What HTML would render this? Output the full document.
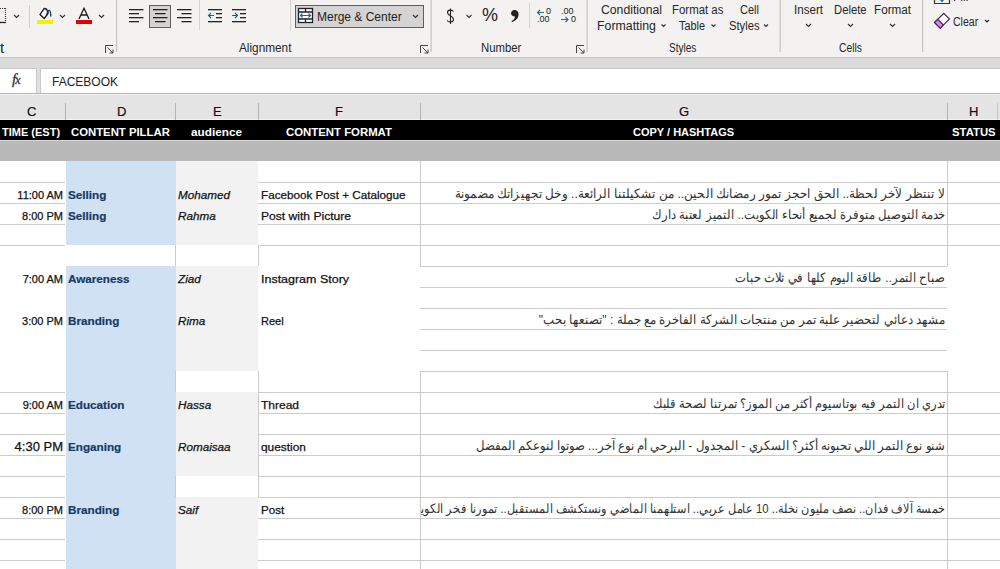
<!DOCTYPE html>
<html><head><meta charset="utf-8">
<style>
*{margin:0;padding:0;box-sizing:border-box}
html,body{width:1000px;height:569px;overflow:hidden;background:#fff;font-family:"Liberation Sans",sans-serif}
.a{position:absolute}
#ribbon{position:absolute;left:0;top:0;width:1000px;height:57px;background:#f3f2f1}
.lbl{position:absolute;font-size:12px;color:#262626;line-height:14px;white-space:nowrap}
.sep{position:absolute;width:1px;background:#c8c8c8}
.gsep{position:absolute;width:1px;background:#c6c6c6;top:0;height:52px}
.chev{position:absolute;width:5px;height:5px;border-right:1.3px solid #333;border-bottom:1.3px solid #333;transform:rotate(45deg)}
.dl{position:absolute;width:8px;height:8px}
.rt{position:absolute;font-size:12px;color:#262626;line-height:14px;white-space:nowrap}
#fbar{position:absolute;left:0;top:57px;width:1000px;height:36px;background:linear-gradient(#dadada,#dcdcdc 30%,#e3e3e3);border-top:1px solid #c6c5c4}
#colh{position:absolute;left:0;top:93px;width:1000px;height:27px;background:#e4e4e4;border-top:1px solid #b8b8b8;box-shadow:inset 0 1px 0 #f2f2f2,inset 0 -1px 0 #f4f4f4}
.ch{position:absolute;top:105px;font-size:13px;color:#111;line-height:13px;-webkit-text-stroke:0.2px #111}
.cdiv{position:absolute;top:103px;height:17px;width:1px;background:#b4b4b4}
#hdr{position:absolute;left:0;top:120px;width:1000px;height:20px;background:#000;border-bottom:1px solid #d6d6d6;box-sizing:content-box}
.ht{position:absolute;top:127px;font-size:11px;font-weight:bold;color:#fff;line-height:11px;white-space:nowrap}
#gband{position:absolute;left:0;top:141px;width:1000px;height:20px;background:#b9b9b9}
.hl{position:absolute;height:1px;background:#d0d0d0}
.vl{position:absolute;width:1px;background:#d0d0d0}
.t{position:absolute;font-size:12px;line-height:12px;white-space:nowrap;color:#111;-webkit-text-stroke:0.25px #111}
.tm{text-align:right;width:61px;left:2px;font-size:11px;line-height:11px}
.pl{left:68px;font-weight:bold;color:#173a66;font-size:11.7px;-webkit-text-stroke:0.2px #173a66}
.au{left:178px;font-style:italic;font-size:11.7px}
.fm{left:261px;font-size:11.7px}
.arw{position:absolute;left:421px;width:524px;height:16px;overflow:hidden}
.ar{position:absolute;right:0;direction:rtl;font-size:12px;line-height:12px;white-space:nowrap;color:#333;transform-origin:100% 10px}
</style></head><body>
<div id="ribbon"></div>
<svg class="a" style="left:0;top:0" width="1000" height="57" viewBox="0 0 1000 57">
<g fill="none" stroke="#333" stroke-width="1.2">
 <!-- border icon partial -->
 <path d="M0 22.5H6" stroke="#222" stroke-width="1.3"/>
 <path d="M5.5 8V22" stroke="#333" stroke-dasharray="1 1"/>
 <path d="M0 8.5H5" stroke="#333" stroke-dasharray="1 1"/>
 <!-- chevrons -->
 <polyline points="14,15 16.5,17.5 19,15"/>
 <polyline points="60,15 62.5,17.5 65,15"/>
 <polyline points="99,15 101.5,17.5 104,15"/>
 <polyline points="466.5,15 469,17.5 471.5,15" stroke-width="1.1"/>
</g>
<!-- separators -->
<rect x="29" y="5" width="1" height="23" fill="#d0d0d0"/>
<rect x="116" y="0" width="1.2" height="52" fill="#c4c4c4"/>
<rect x="199" y="0" width="1" height="30" fill="#d4d4d4"/>
<rect x="290" y="0" width="1" height="31" fill="#d4d4d4"/>
<rect x="430.5" y="0" width="1.2" height="52" fill="#c4c4c4"/>
<rect x="529" y="3" width="1" height="25" fill="#d4d4d4"/>
<rect x="586.5" y="0" width="1.2" height="52" fill="#c4c4c4"/>
<rect x="779.5" y="0" width="1.2" height="52" fill="#c4c4c4"/>
<rect x="922" y="0" width="1.2" height="52" fill="#c4c4c4"/>
<!-- fill bucket -->
<g fill="none" stroke="#111" stroke-width="1.3" stroke-linejoin="round">
 <path d="M40 14.5 L44.3 8.3 L46.6 9.2 L48.2 13.2 L44.2 18.6 Z"/>
 <path d="M46.5 15.5 Q48 10 49.5 10.5 Q50.8 11 50.8 16.5" stroke="#15304f"/>
</g>
<rect x="37" y="20" width="16" height="4" fill="#f2f200"/>
<!-- font color A -->
<path d="M79 19 L84 8.3 L89 19 M80.9 15 H87.1" fill="none" stroke="#1a1a1a" stroke-width="1.3"/>
<rect x="76" y="20" width="16" height="4" fill="#e00000"/>
<!-- dialog launchers -->
<g fill="none" stroke="#444" stroke-width="1">
 <path d="M105.5 53 V45.5 H113"/><path d="M107.5 47.5 L113 53 M109.5 53 H113 V49.5"/>
 <path d="M420.5 53 V45.5 H428"/><path d="M422.5 47.5 L428 53 M424.5 53 H428 V49.5"/>
 <path d="M576.5 53 V45.5 H584"/><path d="M578.5 47.5 L584 53 M580.5 53 H584 V49.5"/>
</g>
<!-- align left -->
<g fill="#222">
 <rect x="129" y="9" width="14.5" height="1.3"/><rect x="129" y="13" width="10" height="1.3"/><rect x="129" y="17" width="14.5" height="1.3"/><rect x="129" y="21" width="10" height="1.3"/>
</g>
<!-- center button -->
<rect x="149.5" y="5.5" width="21" height="22" fill="#d4d4d4" stroke="#5e5e5e" stroke-width="1"/>
<g fill="#222">
 <rect x="153" y="9" width="14.5" height="1.3"/><rect x="155" y="13" width="10.5" height="1.3"/><rect x="153" y="17" width="14.5" height="1.3"/><rect x="155" y="21" width="10.5" height="1.3"/>
</g>
<!-- align right -->
<g fill="#222">
 <rect x="177" y="9" width="14.5" height="1.3"/><rect x="181.5" y="13" width="10" height="1.3"/><rect x="177" y="17" width="14.5" height="1.3"/><rect x="181.5" y="21" width="10" height="1.3"/>
</g>
<!-- decrease indent -->
<g fill="#222">
 <rect x="208" y="9" width="14" height="1.3"/><rect x="216" y="13" width="6" height="1.3"/><rect x="216" y="17" width="6" height="1.3"/><rect x="208" y="21" width="14" height="1.3"/>
</g>
<path d="M214 15.5 H208.5 M211 13 L208.5 15.5 L211 18" fill="none" stroke="#22607e" stroke-width="1.1"/>
<!-- increase indent -->
<g fill="#222">
 <rect x="232" y="9" width="14" height="1.3"/><rect x="240" y="13" width="6" height="1.3"/><rect x="240" y="17" width="6" height="1.3"/><rect x="232" y="21" width="14" height="1.3"/>
</g>
<path d="M232 15.5 H237.5 M235 13 L237.5 15.5 L235 18" fill="none" stroke="#22607e" stroke-width="1.1"/>
<!-- merge & center button -->
<rect x="295.5" y="5.5" width="128" height="22" fill="#d4d4d4" stroke="#5e5e5e" stroke-width="1"/>
<g fill="none" stroke="#222" stroke-width="1.3">
 <rect x="298.5" y="8.5" width="14" height="14" fill="#fff"/>
 <path d="M298.5 12 H312.5 M298.5 19 H312.5 M305.5 8.5 V12 M305.5 19 V22.5"/>
</g>
<path d="M300.5 15.5 H310.5 M302.5 13.5 L300.5 15.5 L302.5 17.5 M308.5 13.5 L310.5 15.5 L308.5 17.5" fill="none" stroke="#27698f" stroke-width="1.2"/>
<polyline points="413,15 415.5,17.5 418,15" fill="none" stroke="#333" stroke-width="1.2"/>
<path d="M453.5 11.5 C452 9.5 447.5 9.5 447.5 12.5 C447.5 16 453.5 15.5 453.5 19.5 C453.5 22.5 448.5 22.5 447 20.5 M450.5 8.5 V24" fill="none" stroke="#222" stroke-width="1.1"/>
<path d="M514.5 10 C517.5 10 519 12.5 518.5 15.5 C518 18.5 515.5 21 512 22 L511.5 21 C513.5 20 514.8 18.5 515 16.5 C512.5 16.5 511 15 511 13.3 C511 11.3 512.5 10 514.5 10 Z" fill="#222"/>
<!-- increase decimal arrows -->
<path d="M544 12.5 H537.5 M540 10 L537.5 12.5 L540 15" fill="none" stroke="#27698f" stroke-width="1.1"/>
<path d="M561 19.5 H568 M565.5 17 L568 19.5 L565.5 22" fill="none" stroke="#27698f" stroke-width="1.1"/>
<!-- clear eraser -->
<g transform="translate(942 20.8) rotate(-45)">
 <rect x="-6.5" y="-4" width="13" height="8" fill="#fff" stroke="#4f1f5f" stroke-width="1.2"/>
 <rect x="-6.5" y="-4" width="4.5" height="8" fill="#d58ae6" stroke="#4f1f5f" stroke-width="1.2"/>
</g>
<!-- fill icon partial -->
<path d="M934.5 0 V3.5 H949.5 V0" fill="none" stroke="#333" stroke-width="1.2"/>
<path d="M940 0 L942 2.5 L944 0" fill="#27698f"/>
<polyline points="985,20 987,22 989,20" fill="none" stroke="#222" stroke-width="1.1"/>
<polyline points="661.5,24.5 663.5,26.5 665.5,24.5" fill="none" stroke="#333" stroke-width="1.1"/>
<polyline points="711.5,24.5 713.5,26.5 715.5,24.5" fill="none" stroke="#333" stroke-width="1.1"/>
<polyline points="764,24.5 766,26.5 768,24.5" fill="none" stroke="#333" stroke-width="1.1"/>
<polyline points="806,24 808.5,26.5 811,24" fill="none" stroke="#333" stroke-width="1.2"/>
<polyline points="848,24 850.5,26.5 853,24" fill="none" stroke="#333" stroke-width="1.2"/>
<polyline points="890,24 892.5,26.5 895,24" fill="none" stroke="#333" stroke-width="1.2"/>
</svg>
<div class="rt" style="left:0px;top:41px;font-size:15px;line-height:14px">t</div>
<div class="rt" style="left:239.4px;top:41px;transform:scaleX(0.983);transform-origin:0 0">Alignment</div>
<div class="rt" style="left:317px;top:10px;font-size:12px;color:#222">Merge &amp; Center</div>

<div class="rt" style="left:482px;top:6px;font-size:18px;line-height:18px;color:#222">%</div>

<div class="rt" style="left:546px;top:7px;font-size:9px;line-height:9px;color:#222">0</div>
<div class="rt" style="left:537px;top:15px;font-size:9px;line-height:9px;color:#222">.00</div>
<div class="rt" style="left:561px;top:7px;font-size:9px;line-height:9px;color:#222">.00</div>
<div class="rt" style="left:571px;top:15px;font-size:9px;line-height:9px;color:#222">0</div>
<div class="rt" style="left:481.0px;top:41px;transform:scaleX(0.946);transform-origin:0 0">Number</div>
<div class="rt" style="left:601.4px;top:3px;transform:scaleX(1.017);transform-origin:0 0">Conditional</div>
<div class="rt" style="left:597.4px;top:19px;transform:scaleX(1.028);transform-origin:0 0">Formatting</div>
<div class="rt" style="left:672.0px;top:3px;transform:scaleX(0.952);transform-origin:0 0">Format as</div>
<div class="rt" style="left:679.4px;top:19px;transform:scaleX(0.906);transform-origin:0 0">Table</div>
<div class="rt" style="left:740.0px;top:3px;transform:scaleX(0.918);transform-origin:0 0">Cell</div>
<div class="rt" style="left:728.8px;top:19px;transform:scaleX(0.936);transform-origin:0 0">Styles</div>
<div class="rt" style="left:669.4px;top:41px;transform:scaleX(0.838);transform-origin:0 0">Styles</div>
<div class="rt" style="left:794.4px;top:3px;transform:scaleX(0.967);transform-origin:0 0">Insert</div>
<div class="rt" style="left:834.4px;top:3px;transform:scaleX(0.939);transform-origin:0 0">Delete</div>
<div class="rt" style="left:874.4px;top:3px;transform:scaleX(0.974);transform-origin:0 0">Format</div>
<div class="rt" style="left:839.4px;top:41px;transform:scaleX(0.861);transform-origin:0 0">Cells</div>
<div class="rt" style="left:953.2px;top:15px;transform:scaleX(0.878);transform-origin:0 0">Clear</div>
<div class="rt" style="left:953px;top:-10px">Fill</div>

<div id="fbar"></div>
<div class="a" style="left:0;top:68px;width:37px;height:26px;background:#fff;border:1px solid #c8c8c8;border-left:none"></div>
<div class="a" style="left:40px;top:68px;width:960px;height:26px;background:#fff;border:1px solid #c8c8c8;border-right:none"></div>
<div class="a" style="left:12px;top:72px;font-family:'Liberation Serif',serif;font-style:italic;font-size:15px;line-height:15px;color:#333;-webkit-text-stroke:0.3px #333">f<span style="font-size:12px;margin-left:-1px">x</span></div>
<div class="a" style="left:52px;top:75px;font-size:12px;line-height:14px;color:#222">FACEBOOK</div>

<div id="colh"></div>
<div class="ch" style="left:27px">C</div>
<div class="ch" style="left:117px">D</div>
<div class="ch" style="left:213px">E</div>
<div class="ch" style="left:335px">F</div>
<div class="ch" style="left:679px">G</div>
<div class="ch" style="left:969px">H</div>
<div class="cdiv" style="left:65px"></div>
<div class="cdiv" style="left:175px"></div>
<div class="cdiv" style="left:258px"></div>
<div class="cdiv" style="left:420px"></div>
<div class="cdiv" style="left:947px"></div>
<div class="cdiv" style="left:997px;background:#c8c8c8"></div>

<div id="hdr"></div>
<div class="ht" style="left:2px">TIME (EST)</div>
<div class="ht" style="left:71px;transform:scaleX(1.03);transform-origin:0 0">CONTENT PILLAR</div>
<div class="ht" style="left:191px;transform:scaleX(1.07);transform-origin:0 0">audience</div>
<div class="ht" style="left:286px;transform:scaleX(1.034);transform-origin:0 0">CONTENT FORMAT</div>
<div class="ht" style="left:633px">COPY / HASHTAGS</div>
<div class="ht" style="left:952px;transform:scaleX(1.03);transform-origin:0 0">STATUS</div>

<div id="gband"></div>
<!--GRID-->
<div class="a" style="left:66px;top:161px;width:110px;height:84px;background:#cfe1f3"></div>
<div class="a" style="left:66px;top:266px;width:110px;height:303px;background:#cfe1f3"></div>
<div class="a" style="left:176px;top:161px;width:82px;height:84px;background:#f2f2f2"></div>
<div class="a" style="left:176px;top:266px;width:82px;height:105px;background:#f2f2f2"></div>
<div class="a" style="left:176px;top:392px;width:82px;height:84px;background:#f2f2f2"></div>
<div class="a" style="left:176px;top:497px;width:82px;height:72px;background:#f2f2f2"></div>
<div class="a" style="left:0px;top:182px;width:65px;height:1px;background:#cbcbcb"></div>
<div class="a" style="left:0px;top:203px;width:65px;height:1px;background:#cbcbcb"></div>
<div class="a" style="left:0px;top:224px;width:65px;height:1px;background:#cbcbcb"></div>
<div class="a" style="left:0px;top:245px;width:65px;height:1px;background:#cbcbcb"></div>
<div class="a" style="left:0px;top:392px;width:65px;height:1px;background:#cbcbcb"></div>
<div class="a" style="left:0px;top:413px;width:65px;height:1px;background:#cbcbcb"></div>
<div class="a" style="left:0px;top:434px;width:65px;height:1px;background:#cbcbcb"></div>
<div class="a" style="left:0px;top:455px;width:65px;height:1px;background:#cbcbcb"></div>
<div class="a" style="left:0px;top:476px;width:65px;height:1px;background:#cbcbcb"></div>
<div class="a" style="left:0px;top:497px;width:65px;height:1px;background:#cbcbcb"></div>
<div class="a" style="left:0px;top:518px;width:65px;height:1px;background:#cbcbcb"></div>
<div class="a" style="left:0px;top:539px;width:65px;height:1px;background:#cbcbcb"></div>
<div class="a" style="left:0px;top:560px;width:65px;height:1px;background:#cbcbcb"></div>
<div class="a" style="left:175px;top:245px;width:1px;height:21px;background:#cbcbcb"></div>
<div class="a" style="left:175px;top:371px;width:1px;height:21px;background:#cbcbcb"></div>
<div class="a" style="left:175px;top:476px;width:1px;height:21px;background:#cbcbcb"></div>
<div class="a" style="left:258px;top:182px;width:162px;height:1px;background:#cbcbcb"></div>
<div class="a" style="left:258px;top:203px;width:162px;height:1px;background:#cbcbcb"></div>
<div class="a" style="left:258px;top:224px;width:162px;height:1px;background:#cbcbcb"></div>
<div class="a" style="left:258px;top:245px;width:162px;height:1px;background:#cbcbcb"></div>
<div class="a" style="left:258px;top:392px;width:162px;height:1px;background:#cbcbcb"></div>
<div class="a" style="left:258px;top:413px;width:162px;height:1px;background:#cbcbcb"></div>
<div class="a" style="left:258px;top:434px;width:162px;height:1px;background:#cbcbcb"></div>
<div class="a" style="left:258px;top:455px;width:162px;height:1px;background:#cbcbcb"></div>
<div class="a" style="left:258px;top:476px;width:162px;height:1px;background:#cbcbcb"></div>
<div class="a" style="left:258px;top:497px;width:162px;height:1px;background:#cbcbcb"></div>
<div class="a" style="left:258px;top:518px;width:162px;height:1px;background:#cbcbcb"></div>
<div class="a" style="left:258px;top:539px;width:162px;height:1px;background:#cbcbcb"></div>
<div class="a" style="left:258px;top:560px;width:162px;height:1px;background:#cbcbcb"></div>
<div class="a" style="left:258px;top:245px;width:1px;height:21px;background:#cbcbcb"></div>
<div class="a" style="left:258px;top:371px;width:1px;height:126px;background:#cbcbcb"></div>
<div class="a" style="left:420px;top:182px;width:527px;height:1px;background:#cbcbcb"></div>
<div class="a" style="left:420px;top:203px;width:527px;height:1px;background:#cbcbcb"></div>
<div class="a" style="left:420px;top:224px;width:527px;height:1px;background:#cbcbcb"></div>
<div class="a" style="left:420px;top:245px;width:527px;height:1px;background:#cbcbcb"></div>
<div class="a" style="left:420px;top:266px;width:527px;height:1px;background:#cbcbcb"></div>
<div class="a" style="left:420px;top:287px;width:527px;height:1px;background:#cbcbcb"></div>
<div class="a" style="left:420px;top:308px;width:527px;height:1px;background:#cbcbcb"></div>
<div class="a" style="left:420px;top:329px;width:527px;height:1px;background:#cbcbcb"></div>
<div class="a" style="left:420px;top:350px;width:527px;height:1px;background:#cbcbcb"></div>
<div class="a" style="left:420px;top:371px;width:527px;height:1px;background:#cbcbcb"></div>
<div class="a" style="left:420px;top:392px;width:527px;height:1px;background:#cbcbcb"></div>
<div class="a" style="left:420px;top:413px;width:527px;height:1px;background:#cbcbcb"></div>
<div class="a" style="left:420px;top:434px;width:527px;height:1px;background:#cbcbcb"></div>
<div class="a" style="left:420px;top:455px;width:527px;height:1px;background:#cbcbcb"></div>
<div class="a" style="left:420px;top:476px;width:527px;height:1px;background:#cbcbcb"></div>
<div class="a" style="left:420px;top:497px;width:527px;height:1px;background:#cbcbcb"></div>
<div class="a" style="left:420px;top:518px;width:527px;height:1px;background:#cbcbcb"></div>
<div class="a" style="left:420px;top:539px;width:527px;height:1px;background:#cbcbcb"></div>
<div class="a" style="left:420px;top:560px;width:527px;height:1px;background:#cbcbcb"></div>
<div class="a" style="left:420px;top:161px;width:1px;height:105px;background:#cbcbcb"></div>
<div class="a" style="left:947px;top:161px;width:1px;height:105px;background:#cbcbcb"></div>
<div class="a" style="left:420px;top:371px;width:1px;height:198px;background:#cbcbcb"></div>
<div class="a" style="left:947px;top:371px;width:1px;height:198px;background:#cbcbcb"></div>
<div class="a" style="left:947px;top:182px;width:53px;height:1px;background:#cbcbcb"></div>
<div class="a" style="left:947px;top:203px;width:53px;height:1px;background:#cbcbcb"></div>
<div class="a" style="left:947px;top:224px;width:53px;height:1px;background:#cbcbcb"></div>
<div class="a" style="left:947px;top:245px;width:53px;height:1px;background:#cbcbcb"></div>
<div class="a" style="left:947px;top:392px;width:53px;height:1px;background:#cbcbcb"></div>
<div class="a" style="left:947px;top:413px;width:53px;height:1px;background:#cbcbcb"></div>
<div class="a" style="left:947px;top:434px;width:53px;height:1px;background:#cbcbcb"></div>
<div class="a" style="left:947px;top:455px;width:53px;height:1px;background:#cbcbcb"></div>
<div class="a" style="left:947px;top:476px;width:53px;height:1px;background:#cbcbcb"></div>
<div class="a" style="left:947px;top:497px;width:53px;height:1px;background:#cbcbcb"></div>
<div class="a" style="left:947px;top:518px;width:53px;height:1px;background:#cbcbcb"></div>
<div class="a" style="left:947px;top:539px;width:53px;height:1px;background:#cbcbcb"></div>
<div class="a" style="left:947px;top:560px;width:53px;height:1px;background:#cbcbcb"></div>
<div class="t tm" style="top:190px">11:00 AM</div>
<div class="t pl" style="top:189px">Selling</div>
<div class="t au" style="top:189px">Mohamed</div>
<div class="t fm" style="top:189px;transform:scaleX(1.000);transform-origin:0 0">Facebook Post + Catalogue</div>
<div class="t tm" style="top:211px">8:00 PM</div>
<div class="t pl" style="top:210px">Selling</div>
<div class="t au" style="top:210px">Rahma</div>
<div class="t fm" style="top:210px;transform:scaleX(1.034);transform-origin:0 0">Post with Picture</div>
<div class="t tm" style="top:274px">7:00 AM</div>
<div class="t pl" style="top:273px">Awareness</div>
<div class="t au" style="top:273px">Ziad</div>
<div class="t fm" style="top:273px;transform:scaleX(1.067);transform-origin:0 0">Instagram Story</div>
<div class="t tm" style="top:316px">3:00 PM</div>
<div class="t pl" style="top:315px">Branding</div>
<div class="t au" style="top:315px">Rima</div>
<div class="t fm" style="top:315px;transform:scaleX(0.941);transform-origin:0 0">Reel</div>
<div class="t tm" style="top:400px">9:00 AM</div>
<div class="t pl" style="top:399px">Education</div>
<div class="t au" style="top:399px">Hassa</div>
<div class="t fm" style="top:399px;transform:scaleX(1.027);transform-origin:0 0">Thread</div>
<div class="t tm" style="top:440px;font-size:13px;line-height:13px;width:61px">4:30 PM</div>
<div class="t pl" style="top:441px">Enganing</div>
<div class="t au" style="top:441px">Romaisaa</div>
<div class="t fm" style="top:441px;transform:scaleX(1.018);transform-origin:0 0">question</div>
<div class="t tm" style="top:505px">8:00 PM</div>
<div class="t pl" style="top:504px">Branding</div>
<div class="t au" style="top:504px">Saif</div>
<div class="t fm" style="top:504px;transform:scaleX(0.990);transform-origin:0 0">Post</div>
<div class="arw" style="top:185px"><div class="ar" style="top:3px;transform:scale(1.0162,1.1)">لا تنتظر لآخر لحظة.. الحق احجز تمور رمضانك الحين.. من تشكيلتنا الرائعة.. وخل تجهيزاتك مضمونة</div></div>
<div class="arw" style="top:206px"><div class="ar" style="top:3px;transform:scale(0.9838,1.1)">خدمة التوصيل متوفرة لجميع أنحاء الكويت.. التميز لعتبة دارك</div></div>
<div class="arw" style="top:269px"><div class="ar" style="top:3px;transform:scale(0.9813,1.1)">صباح التمر.. طاقة اليوم كلها في ثلاث حبات</div></div>
<div class="arw" style="top:311px"><div class="ar" style="top:3px;transform:scale(1.0007,1.1)">مشهد دعائي لتحضير علبة تمر من منتجات الشركة الفاخرة مع جملة : "تصنعها بحب"</div></div>
<div class="arw" style="top:395px"><div class="ar" style="top:3px;transform:scale(0.9739,1.1)">تدري ان التمر فيه بوتاسيوم أكثر من الموز؟ تمرتنا لصحة قلبك</div></div>
<div class="arw" style="top:437px"><div class="ar" style="top:3px;transform:scale(0.9887,1.1)">شنو نوع التمر اللي تحبونه أكثر؟ السكري - المجدول - البرحي أم نوع آخر... صوتوا لنوعكم المفضل</div></div>
<div class="arw" style="top:500px"><div class="ar" style="top:3px;transform:scale(0.9520,1.1)">خمسة آلاف فدان.. نصف مليون نخلة.. 10 عامل عربي.. استلهمنا الماضي ونستكشف المستقبل.. تمورنا فخر الكويت</div></div>
<!--/GRID-->
</body></html>
